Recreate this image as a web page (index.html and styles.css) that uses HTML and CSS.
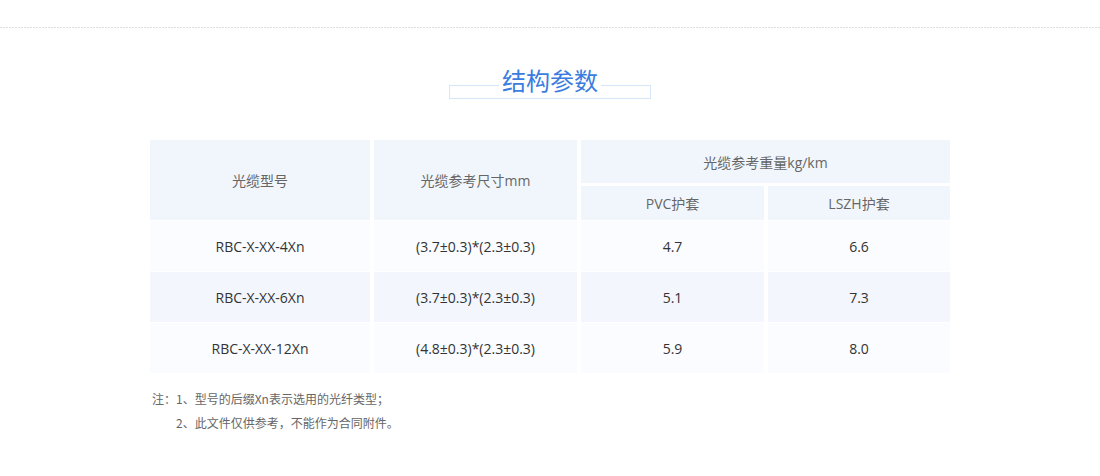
FILE: index.html
```html
<!DOCTYPE html>
<html lang="zh-CN">
<head>
<meta charset="utf-8">
<title>结构参数</title>
<link rel="stylesheet" href="styles.css">
</head>
<body>
<div class="topline"></div>
<section class="section">
  <div class="title-wrap">
    <h2 class="title">结构参数</h2>
    <div class="title-box"></div>
  </div>

  <div class="table">
    <div class="thead">
      <div class="cell th span2">光缆型号</div>
      <div class="cell th span2">光缆参考尺寸mm</div>
      <div class="cell th wide">光缆参考重量kg/km</div>
      <div class="cell th">PVC护套</div>
      <div class="cell th">LSZH护套</div>
    </div>
    <div class="tbody">
      <div class="row odd">
        <div class="cell">RBC-X-XX-4Xn</div>
        <div class="cell">(3.7±0.3)*(2.3±0.3)</div>
        <div class="cell">4.7</div>
        <div class="cell">6.6</div>
      </div>
      <div class="row even">
        <div class="cell">RBC-X-XX-6Xn</div>
        <div class="cell">(3.7±0.3)*(2.3±0.3)</div>
        <div class="cell">5.1</div>
        <div class="cell">7.3</div>
      </div>
      <div class="row odd">
        <div class="cell">RBC-X-XX-12Xn</div>
        <div class="cell">(4.8±0.3)*(2.3±0.3)</div>
        <div class="cell">5.9</div>
        <div class="cell">8.0</div>
      </div>
    </div>
  </div>

  <div class="notes">
    <p class="note">注<span class="punc">：</span>1、型号的后缀Xn表示选用的光纤类型<span class="punc">；</span></p>
    <p class="note indent">2、此文件仅供参考，不能作为合同附件。</p>
  </div>
</section>
</body>
</html>
```

FILE: styles.css
```css
* { box-sizing: border-box; }
html, body { margin: 0; padding: 0; background: #fff; }
body {
  font-family: "Open Sans", "Noto Sans CJK SC", sans-serif;
  font-size: 14px;
  color: #333;
}
.topline {
  height: 1px;
  margin-top: 27px;
  background: repeating-linear-gradient(to right, #dddddd 0 2px, transparent 2px 3px);
}
.section {
  padding-top: 36px;
}
.title-wrap {
  display: flex;
  flex-direction: column;
  align-items: center;
}
.title {
  position: relative;
  z-index: 1;
  margin: 0;
  padding: 0 3px;
  background: #fff;
  font-family: "Noto Sans CJK SC", sans-serif;
  font-weight: normal;
  font-size: 24px;
  line-height: 32px;
  color: #3a7ce0;
}
.title-box {
  width: 202px;
  height: 14px;
  margin-top: -11px;
  border: 1px solid #d6e5f8;
}
.table {
  width: 800px;
  margin: 41px auto 0;
}
.thead {
  display: grid;
  grid-template-columns: 220px 203px 183px 182px;
  grid-template-rows: 43px 34px;
  column-gap: 4px;
  row-gap: 3px;
}
.cell {
  display: flex;
  align-items: center;
  justify-content: center;
}
.th {
  background: #f1f6fd;
  color: #666;
  font-size: 14px;
}
.span2 { grid-row: span 2; }
.wide { grid-column: span 2; }
.tbody {
  display: flex;
  flex-direction: column;
  gap: 1px;
  margin-top: 1px;
}
.row {
  display: grid;
  grid-template-columns: 220px 203px 183px 182px;
  column-gap: 4px;
  height: 50px;
}
.row.odd .cell { background: #fafcff; }
.row.even .cell { background: #f3f7fd; }
.notes {
  width: 800px;
  margin: 14px auto 0;
  font-family: "Noto Sans CJK SC", sans-serif;
  font-size: 12px;
  color: #666;
}
.note {
  margin: 0;
  line-height: 24px;
  padding-left: 2px;
}
.note.indent { padding-left: 26px; }
.punc { font-family: "Noto Sans CJK JP", "Noto Sans CJK SC", sans-serif; }
```
